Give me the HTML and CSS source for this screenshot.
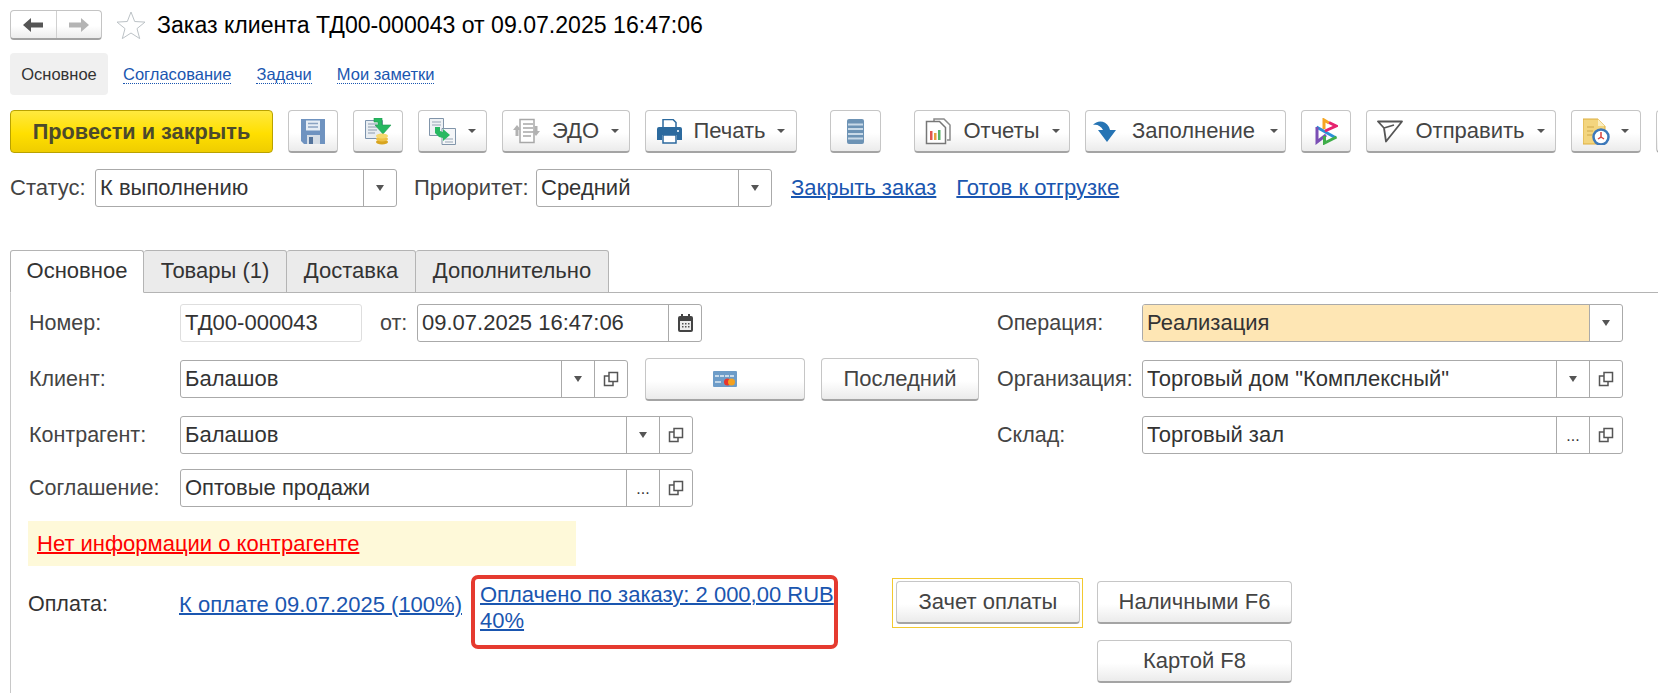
FILE: index.html
```html
<!DOCTYPE html>
<html lang="ru">

<head>
    <meta charset="UTF-8">
    <title>Заказ клиента ТД00-000043</title>
    <link rel="stylesheet" href="styles.css">
</head>

<body>
    <svg class="defs" width="0" height="0">
        <symbol id="copy" viewBox="0 0 16 16">
            <path d="M6 1.500h8.500v9H6z M6 5H1.500v9.500H10v-4" fill="none" stroke="#555" stroke-width="1.500" />
        </symbol>
    </svg>

    <div class="head">
        <div class="nav-btns">
            <span class="nav-btn">
                <svg width="22" height="16" viewBox="0 0 22 16">
                    <path d="M1 8l8-7v4.500h12v5H9V15z" fill="#555" />
                </svg>
            </span>
            <span class="nav-btn">
                <svg width="22" height="16" viewBox="0 0 22 16">
                    <path d="M21 8l-8-7v4.500H1v5h12V15z" fill="#b4b4b4" />
                </svg>
            </span>
        </div>
        <svg class="star" width="30" height="28" viewBox="0 0 30 28">
            <path d="M15 1l3.700 9.500 10.300.6-8 6.500 2.700 10L15 22l-8.700 5.600 2.700-10-8-6.500 10.300-.6z" fill="#fff" stroke="#bcc2c6" />
        </svg>
        <h1 class="title">Заказ клиента ТД00-000043 от 09.07.2025 16:47:06</h1>
    </div>

    <div class="sections">
        <span class="section active">Основное</span>
        <a class="section-link">Согласование</a>
        <a class="section-link">Задачи</a>
        <a class="section-link">Мои заметки</a>
    </div>

    <div class="toolbar">
        <button class="btn btn-post">Провести и закрыть</button>
        <button class="btn btn-icon">
            <svg width="24" height="25" viewBox="0 0 24 25">
                <path d="M0 0h24v25H3l-3-3z" fill="#6f93c0" />
                <path d="M5 1.500h14v10H5z" fill="#e6edf5" />
                <path d="M7 4.500h10M7 8h10" stroke="#8aa3c2" stroke-width="1.500" />
                <path d="M6 16h13v9H6z" fill="#d5dde6" />
                <path d="M8 18h4v7H8z" fill="#54749c" />
            </svg>
        </button>
        <button class="btn btn-icon">
            <svg width="27" height="27" viewBox="0 0 27 27">
                <path d="M.5 2.500h17v18H.500z" fill="#e8edf2" stroke="#7c93ad" />
                <path d="M3 6h9M3 9h9M3 12h9M3 15h7" stroke="#8c9cad" stroke-width="1.200" />
                <path d="M9 0h8v7h9l-8 9-8-9h3V4H9z" fill="#27b861" stroke="#1e9a4f" stroke-width=".6" />
                <ellipse cx="17" cy="24" rx="6" ry="2.500" fill="#d8a520" />
                <ellipse cx="17" cy="21" rx="6" ry="2.500" fill="#eec246" />
                <ellipse cx="17" cy="18" rx="6" ry="2.500" fill="#f6d86d" />
            </svg>
        </button>
        <button class="btn btn-docs">
            <svg width="27" height="27" viewBox="0 0 27 27">
                <path d="M.5.500h14v17H.500z" fill="#eef1f4" stroke="#8195aa" />
                <path d="M3 4h9M3 7h9" stroke="#97a5b4" />
                <path d="M13 10.500h13.500v16H13z" fill="#f4f6f8" stroke="#8195aa" />
                <path d="M16 21h8M16 24h8" stroke="#97a5b4" />
                <path d="M6 9h5v4l3 1v-3l7 6-7 6v-3l-4-1-4-4z" fill="#27b861" />
            </svg>
            <i class="caret"></i>
        </button>
        <button class="btn btn-edo">
            <svg width="27" height="26" viewBox="0 0 27 26">
                <path d="M7 1.500h14v23H7z" fill="#fff" stroke="#a8a8a8" stroke-width="1.500" />
                <path d="M10 6h10M10 10h10M10 14h10M10 18h8" stroke="#a8a8a8" stroke-width="1.500" />
                <path d="M0 12l4-5 4 5H5.500v6h-3v-6zM27 13l-4 5-4-5h2.500V8h3v5z" fill="#b2b2b2" />
            </svg>
            <span>ЭДО</span>
            <i class="caret"></i>
        </button>
        <button class="btn btn-print">
            <svg width="25" height="25" viewBox="0 0 25 25">
                <path d="M6 .500h10l3 3V9H6z" fill="#fff" stroke="#2c6a9e" stroke-width="1.500" />
                <path d="M2 8h21a2 2 0 0 1 2 2v11h-5v-5H5v5H0V10a2 2 0 0 1 2-2z" fill="#2c6a9e" />
                <path d="M6 16h13v8H6z" fill="#fff" stroke="#2c6a9e" stroke-width="1.500" />
                <path d="M20 11h2v2h-2z" fill="#cfe0ee" />
            </svg>
            <span>Печать</span>
            <i class="caret"></i>
        </button>
        <button class="btn btn-icon btn-db">
            <svg width="17" height="25" viewBox="0 0 17 25">
                <rect width="17" height="25" rx="2" fill="#6d93b5" />
                <path d="M1 5.500h15M1 10h15M1 15h15M1 19.500h15" stroke="#c9dae8" stroke-width="2" />
            </svg>
        </button>
        <button class="btn btn-reports">
            <svg width="27" height="27" viewBox="0 0 27 27">
                <path d="M10 3V1h10l6 6v15h-3" fill="#fff" stroke="#8b8b8b" stroke-width="1.500" />
                <path d="M2.500 3.500h13l6 6v16h-19z" fill="#fff" stroke="#777" stroke-width="1.500" />
                <path d="M6 13h2.500v9H6z" fill="#e2574c" />
                <path d="M10 15h2.500v7H10z" fill="#e6a23c" />
                <path d="M14 12h2.500v10H14z" fill="#58b368" />
            </svg>
            <span>Отчеты</span>
            <i class="caret"></i>
        </button>
        <button class="btn btn-fill">
            <svg width="24" height="21" viewBox="0 0 24 21">
                <path d="M0 4C4-1 12-1 16 6l1 3h6l-9 12L5 9h5C8 5 4 3 0 4z" fill="#2674b4" />
            </svg>
            <span>Заполнение</span>
            <i class="caret"></i>
        </button>
        <button class="btn btn-icon btn-bit">
            <svg width="23" height="27" viewBox="0 0 23 27" fill="none" stroke-width="3">
                <path d="M1.500 9L21 20" stroke="#2b8fd8" />
                <path d="M2 9v15l9-7" stroke="#7b4fb5" />
                <path d="M9.500 18v7l12-6" stroke="#3fae49" />
                <path d="M9 11V2l5 3" stroke="#f5a623" />
                <path d="M14 4.500l7 3.500-11 5" stroke="#e6236f" />
            </svg>
        </button>
        <button class="btn btn-send">
            <svg width="26" height="23" viewBox="0 0 26 23">
                <path d="M1 1.500h24L9 21.500 7 8z M7 8l10-3" fill="none" stroke="#555" stroke-width="1.800" stroke-linejoin="round" />
            </svg>
            <span>Отправить</span>
            <i class="caret"></i>
        </button>
        <button class="btn btn-clock">
            <svg width="27" height="27" viewBox="0 0 27 27">
                <path d="M0 1h15l7 7v18H0z" fill="#f3d57e" stroke="#dcae3e" />
                <path d="M15 1v7h7z" fill="#fbeec0" />
                <path d="M4 9h7M4 13h6M4 17h5" stroke="#cfa84a" />
                <circle cx="18" cy="19" r="7.500" fill="#fff" stroke="#3c78ba" stroke-width="2.500" />
                <path d="M18 14v5l-3 2M18 19l3 2" stroke="#d8433f" stroke-width="1.500" fill="none" />
            </svg>
            <i class="caret"></i>
        </button>
        <button class="btn btn-cut"></button>
    </div>

    <div class="status-row">
        <span class="status-label">Статус:</span>
        <div class="field field-status">
            <span class="field-text">К выполнению</span>
            <span class="field-btn"><i class="caret caret-dark"></i></span>
        </div>
        <span class="status-label status-label-2">Приоритет:</span>
        <div class="field field-priority">
            <span class="field-text">Средний</span>
            <span class="field-btn"><i class="caret caret-dark"></i></span>
        </div>
        <a class="link link-close">Закрыть заказ</a>
        <a class="link link-ready">Готов к отгрузке</a>
    </div>

    <div class="tabs">
        <span class="tab active tab-main">Основное</span>
        <span class="tab tab-goods">Товары (1)</span>
        <span class="tab tab-delivery">Доставка</span>
        <span class="tab tab-extra">Дополнительно</span>
    </div>

    <div class="form">
        <div class="cols">
            <div class="col-left">
                <div class="row">
                    <span class="label">Номер:</span>
                    <div class="field field-number"><span class="field-text">ТД00-000043</span></div>
                    <span class="label-from">от:</span>
                    <div class="field field-date">
                        <span class="field-text">09.07.2025 16:47:06</span>
                        <span class="field-btn">
                            <svg width="15" height="18" viewBox="0 0 15 18">
                                <path d="M2 2h11a2 2 0 0 1 2 2v12a2 2 0 0 1-2 2H2a2 2 0 0 1-2-2V4a2 2 0 0 1 2-2z" fill="#444" />
                                <path d="M2 7h11v9H2z" fill="#eee" />
                                <path d="M3 0h2v4H3zM10 0h2v4h-2z" fill="#444" />
                                <path d="M4 9h1.500v1.500H4zM7 9h1.500v1.500H7zM10 9h1.500v1.500H10zM4 12h1.500v1.500H4zM7 12h1.500v1.500H7zM10 12h1.500v1.500H10z" fill="#555" />
                            </svg>
                        </span>
                    </div>
                </div>
                <div class="row">
                    <span class="label">Клиент:</span>
                    <div class="field field-client">
                        <span class="field-text">Балашов</span>
                        <span class="field-btn"><i class="caret caret-dark"></i></span>
                        <span class="field-btn"><svg class="icon-copy"><use href="#copy" /></svg></span>
                    </div>
                    <button class="btn btn-card">
                        <svg width="24" height="16" viewBox="0 0 24 16">
                            <rect width="24" height="16" rx="1" fill="#6d9cc8" />
                            <path d="M2 5h4M7 5h4M12 5h4M17 5h4" stroke="#e6eff7" stroke-width="1.500" />
                            <path d="M2 11h6" stroke="#dce8f2" stroke-width="1.500" />
                            <circle cx="14.500" cy="11" r="3.500" fill="#e8352c" />
                            <circle cx="18.500" cy="11" r="3.500" fill="#f4a11f" />
                        </svg>
                    </button>
                    <button class="btn btn-last">Последний</button>
                </div>
                <div class="row">
                    <span class="label">Контрагент:</span>
                    <div class="field field-wide">
                        <span class="field-text">Балашов</span>
                        <span class="field-btn"><i class="caret caret-dark"></i></span>
                        <span class="field-btn"><svg class="icon-copy"><use href="#copy" /></svg></span>
                    </div>
                </div>
                <div class="row row-deal">
                    <span class="label">Соглашение:</span>
                    <div class="field field-wide">
                        <span class="field-text">Оптовые продажи</span>
                        <span class="field-btn field-dots">...</span>
                        <span class="field-btn"><svg class="icon-copy"><use href="#copy" /></svg></span>
                    </div>
                </div>
            </div>

            <div class="col-right">
                <div class="row">
                    <span class="label label-right">Операция:</span>
                    <div class="field field-right field-operation">
                        <span class="field-text">Реализация</span>
                        <span class="field-btn"><i class="caret caret-dark"></i></span>
                    </div>
                </div>
                <div class="row">
                    <span class="label label-right">Организация:</span>
                    <div class="field field-right">
                        <span class="field-text">Торговый дом "Комплексный"</span>
                        <span class="field-btn"><i class="caret caret-dark"></i></span>
                        <span class="field-btn"><svg class="icon-copy"><use href="#copy" /></svg></span>
                    </div>
                </div>
                <div class="row">
                    <span class="label label-right">Склад:</span>
                    <div class="field field-right">
                        <span class="field-text">Торговый зал</span>
                        <span class="field-btn field-dots">...</span>
                        <span class="field-btn"><svg class="icon-copy"><use href="#copy" /></svg></span>
                    </div>
                </div>
            </div>
        </div>

        <div class="notice"><a class="notice-link">Нет информации о контрагенте</a></div>

        <div class="payment">
            <span class="label label-pay">Оплата:</span>
            <a class="link link-pay">К оплате 09.07.2025 (100%)</a>
            <div class="paid-box">
                <a class="link">Оплачено по заказу: 2 000,00 RUB</a><br>
                <a class="link">40%</a>
            </div>
            <div class="focus-wrap"><button class="btn btn-pay">Зачет оплаты</button></div>
            <div class="pay-col">
                <button class="btn btn-pay-2">Наличными F6</button>
                <button class="btn btn-pay-2">Картой F8</button>
            </div>
        </div>
    </div>
</body>

</html>
```

FILE: styles.css
```css
* {
    box-sizing: border-box;
}

html,
body {
    height: 693px;
    overflow: hidden;
}

body {
    margin: 0;
    padding-left: 10px;
    background-color: #fff;
    color: #333;
    font-family: "Liberation Sans", Arial, sans-serif;
    font-size: 22px;
}

.defs {
    position: absolute;
}

.head {
    display: flex;
    align-items: center;
    height: 30px;
    margin-top: 10px;
}

.nav-btns {
    display: flex;
    width: 92px;
    height: 30px;
    border: 1px solid #c4c4c4;
    border-bottom: 2px solid #a2a2a2;
    border-radius: 4px;
    background: linear-gradient(#fff 55%, #ececec);
}

.nav-btn {
    flex: 1;
    display: flex;
    align-items: center;
    justify-content: center;
}

.nav-btn + .nav-btn {
    border-left: 1px solid #d0d0d0;
}

.star {
    margin-left: 14px;
}

.title {
    margin: 0 0 0 11px;
    color: #000;
    font-size: 23.1px;
    font-weight: normal;
}

.sections {
    display: flex;
    align-items: center;
    height: 42px;
    margin-top: 13px;
    font-size: 16.5px;
}

.section {
    display: flex;
    align-items: center;
    justify-content: center;
    width: 98px;
    height: 42px;
    border-radius: 4px;
    background-color: #f0f0f0;
}

.section-link {
    margin-left: 15px;
    margin-right: 10px;
    color: #1a56b0;
    border-bottom: 1px dotted #1a56b0;
    line-height: 18px;
}

.toolbar {
    display: flex;
    gap: 15px;
    height: 43px;
    margin-top: 15px;
}

.btn {
    display: flex;
    align-items: center;
    justify-content: center;
    flex: none;
    height: 43px;
    padding: 0;
    border: 1px solid #c6c6c6;
    border-bottom: 2px solid #a4a4a4;
    border-radius: 4px;
    background: linear-gradient(#fff 55%, #ebebeb);
    color: #444;
    font-family: inherit;
    font-size: 22px;
}

.btn-post {
    width: 263px;
    border: 1px solid #b9a200;
    background: linear-gradient(#ffe93f, #ffdf00 55%, #efcd00);
    color: #4c4a2c;
    font-size: 21.7px;
    font-weight: bold;
}

.btn-icon {
    width: 50px;
}

.btn-docs {
    width: 69px;
    gap: 12px;
}

.btn-edo {
    width: 128px;
    gap: 12px;
}

.btn-print {
    width: 152px;
    gap: 11px;
}

.btn-db {
    width: 51px;
    margin-left: 18px;
}

.btn-reports {
    width: 156px;
    gap: 12px;
    margin-left: 18px;
}

.btn-fill {
    width: 201px;
    gap: 15px;
}

.btn-send {
    width: 190px;
    gap: 12px;
}

.btn-clock {
    width: 70px;
    gap: 11px;
}

.btn-cut {
    width: 40px;
}

.caret {
    display: inline-block;
    width: 0;
    height: 0;
    border-top: 4px solid #555;
    border-left: 4px solid transparent;
    border-right: 4px solid transparent;
}

.caret-dark {
    border-top: 6px solid #555;
}

.status-row {
    display: flex;
    align-items: center;
    height: 38px;
    margin-top: 16px;
}

.status-label {
    width: 85px;
    color: #444;
    white-space: nowrap;
}

.status-label-2 {
    width: 122px;
    margin-left: 17px;
}

.field {
    display: flex;
    flex: none;
    height: 38px;
    border: 1px solid #aaa;
    border-radius: 3px;
    background-color: #fff;
    color: #333;
}

.field-text {
    flex: 1;
    padding-left: 4px;
    line-height: 35px;
    white-space: nowrap;
}

.field-btn {
    display: flex;
    align-items: center;
    justify-content: center;
    width: 33px;
    border-left: 1px solid #aaa;
}

.field-dots {
    align-items: flex-end;
    padding-bottom: 9px;
    font-size: 16px;
    line-height: 16px;
}

.icon-copy {
    width: 16px;
    height: 16px;
}

.field-status {
    width: 302px;
}

.field-priority {
    width: 236px;
}

.link {
    color: #1a56b0;
    text-decoration: underline;
    text-decoration-thickness: 2px;
    white-space: nowrap;
}

.link-close {
    margin-left: 19px;
}

.link-ready {
    margin-left: 20px;
}

.tabs {
    display: flex;
    height: 43px;
    margin-top: 43px;
    border-bottom: 1px solid #b4b4b4;
}

.tab {
    display: flex;
    align-items: center;
    justify-content: center;
    height: 43px;
    padding-bottom: 1px;
    border: 1px solid #b4b4b4;
    border-left: 0;
    border-radius: 3px 3px 0 0;
    background-color: #ebebeb;
    color: #333;
}

.tab.active {
    border-left: 1px solid #b4b4b4;
    border-bottom-color: #fff;
    background-color: #fff;
}

.tab-main {
    width: 134px;
}

.tab-goods {
    width: 143px;
}

.tab-delivery {
    width: 129px;
}

.tab-extra {
    width: 193px;
}

.form {
    height: 400px;
    padding: 11px 0 0 18px;
    border-left: 1px solid #c8c8c8;
}

.cols {
    display: flex;
}

.col-left {
    width: 968px;
}

.row {
    display: flex;
    align-items: center;
    height: 38px;
    margin-bottom: 18px;
}

.row-deal {
    margin-top: -3px;
    margin-bottom: 0;
}

.label {
    flex: none;
    width: 151px;
    color: #444;
    font-size: 21.5px;
}

.label-right {
    width: 145px;
}

.field-number {
    width: 182px;
    border-color: #dedede;
}

.label-from {
    flex: none;
    width: 37px;
    margin-left: 18px;
    color: #444;
    font-size: 21.5px;
}

.field-date {
    width: 285px;
}

.field-client {
    width: 448px;
}

.field-wide {
    width: 513px;
}

.btn-card {
    width: 160px;
    margin-left: 17px;
}

.btn-last {
    width: 158px;
    margin-left: 16px;
}

.field-right {
    width: 481px;
}

.field-operation .field-text {
    background-color: #fee6b4;
    border-radius: 2px 0 0 2px;
}

.notice {
    display: flex;
    align-items: center;
    width: 548px;
    height: 45px;
    margin-top: 14px;
    margin-left: -1px;
    padding-left: 9px;
    background-color: #fef9d9;
}

.notice-link {
    color: #f00;
    text-decoration: underline;
    text-decoration-thickness: 2px;
}

.payment {
    display: flex;
    align-items: flex-start;
    margin-top: 9px;
    margin-left: -1px;
}

.label-pay {
    padding-top: 17px;
    color: #333;
}

.link-pay {
    flex: none;
    width: 292px;
    margin-top: 17px;
}

.paid-box {
    flex: none;
    width: 367px;
    height: 74px;
    padding: 3px 0 0 5px;
    border: 4px solid #e53a2f;
    border-radius: 7px;
    line-height: 26px;
    white-space: nowrap;
}

.focus-wrap {
    flex: none;
    width: 191px;
    height: 50px;
    margin-top: 3px;
    margin-left: 54px;
    padding: 2px 2px 0 3px;
    border: 1px solid #f3c92f;
}

.btn-pay {
    width: 184px;
}

.pay-col {
    display: flex;
    flex-direction: column;
    gap: 16px;
    margin-top: 6px;
    margin-left: 14px;
}

.btn-pay-2 {
    width: 195px;
}
```
